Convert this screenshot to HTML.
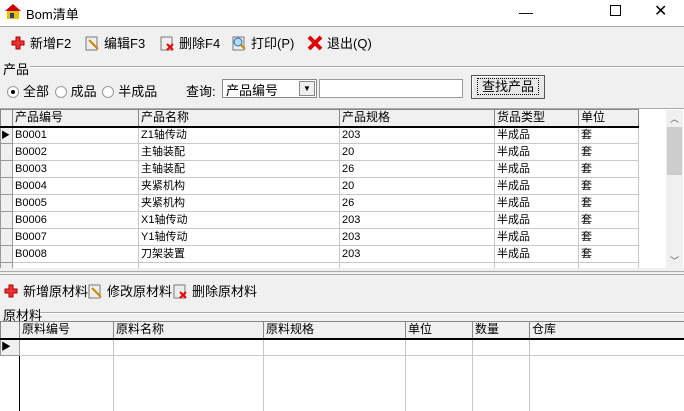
<!DOCTYPE html><html><head><meta charset="utf-8"><style>
*{margin:0;padding:0;box-sizing:border-box}
body{width:684px;height:411px;background:#f0f0f0;font:12px "Liberation Sans","Noto Sans CJK SC",sans-serif;position:relative;overflow:hidden;color:#000}
.a{position:absolute}
.t{font-family:"Liberation Sans","Noto Sans CJK SC",sans-serif}
table{border-collapse:collapse;table-layout:fixed;position:absolute;background:#fff}
td{border:1px solid #c8c8c8;height:17px;padding:0 2px;white-space:nowrap;overflow:hidden;font-size:11px;line-height:15px}
tr.h td{background:#f0f0f0;border:1px solid #888;border-bottom:2px solid #000;font-size:12px}
td.i{background:#f0f0f0;border-color:#999;padding:0}
.tb{position:absolute;top:33px;display:flex;align-items:center;font-size:13px}
.ic{width:16px;height:16px;margin-right:4px;display:inline-block}
.rd{display:inline-block;width:12px;height:12px;border-radius:50%;border:1px solid #999;background:#fff;vertical-align:-2px;margin-right:4px;position:relative}
</style></head><body>
<div class="a" style="left:0;top:0;width:684px;height:27px;background:#fff;border-bottom:1px solid #aaa"></div>
<svg class="a" style="left:4px;top:3px" width="18" height="16"><path d="M1 8 L9 1 L17 8Z" fill="#c00"/><rect x="3" y="8" width="12" height="8" fill="#e8c000"/><rect x="6" y="10" width="4" height="5" fill="#247"/></svg>
<div class="a" style="left:26px;top:4px;font-size:13px">Bom清单</div>
<div class="a" style="left:519px;top:4px;font-size:14px">—</div>
<div class="a" style="left:610px;top:5px;width:11px;height:11px;border:1px solid #000"></div>
<div class="a" style="left:654px;top:1px;font-size:16px">✕</div>

<div class="tb" style="left:10px"><svg class="ic" viewBox="0 0 16 16"><path d="M6 2h4v4h4v4h-4v4H6v-4H2V6h4z" fill="#e33" stroke="#a00"/></svg>新增F2</div>
<div class="tb" style="left:84px"><svg class="ic" viewBox="0 0 16 16"><rect x="2" y="2" width="11" height="13" fill="#eee" stroke="#777"/><path d="M5 5l9 9" stroke="#c80" stroke-width="2"/></svg>编辑F3</div>
<div class="tb" style="left:159px"><svg class="ic" viewBox="0 0 16 16"><rect x="2" y="2" width="11" height="13" fill="#eee" stroke="#777"/><path d="M8 9l6 6M14 9l-6 6" stroke="#e00" stroke-width="2"/></svg>删除F4</div>
<div class="tb" style="left:231px"><svg class="ic" viewBox="0 0 16 16"><rect x="2" y="2" width="11" height="13" fill="#eee" stroke="#777"/><circle cx="7" cy="7" r="4" fill="#adf" stroke="#36a"/><path d="M10 10l4 4" stroke="#c80" stroke-width="2"/></svg>打印(P)</div>
<div class="tb" style="left:307px"><svg class="ic" viewBox="0 0 16 16"><path d="M2 2l12 12M14 2L2 14" stroke="#d00" stroke-width="4"/></svg>退出(Q)</div>

<div class="a" style="left:3px;top:59px;font-size:13px">产品</div>
<div class="a" style="left:30px;top:66px;width:654px;border-top:1px solid #aaa;border-bottom:1px solid #fff"></div>
<div class="a" style="left:7px;top:81px;font-size:13px"><span class="rd"><span class="a" style="left:3px;top:3px;width:4px;height:4px;background:#000;border-radius:50%"></span></span>全部 <span class="rd" style="margin-left:2px"></span>成品 <span class="rd" style="margin-left:2px"></span>半成品</div>
<div class="a" style="left:186px;top:81px;font-size:13px">查询:</div>
<div class="a" style="left:222px;top:79px;width:95px;height:19px;background:#fff;border:1px solid #888;padding:0 3px;font-size:13px">产品编号</div>
<div class="a" style="left:299px;top:81px;width:16px;height:15px;background:#f0f0f0;border:1px solid #888;font-size:8px;text-align:center;line-height:14px">▼</div>
<div class="a" style="left:319px;top:79px;width:144px;height:19px;background:#fff;border:1px solid #999"></div>
<div class="a" style="left:471px;top:75px;width:74px;height:24px;border:1px solid #555;background:#e8e8e8;box-shadow:inset 1px 1px #fff;text-align:center;line-height:22px;font-size:13px"><span style="border:1px dotted #000;padding:0 4px">查找产品</span></div>

<div class="a" style="left:0;top:108px;width:684px;height:163px;background:#fff;border-top:1px solid #aaa"></div>
<table style="left:0;top:109px;width:638px" class="t">
<colgroup><col style="width:12px"><col style="width:126px"><col style="width:201px"><col style="width:155px"><col style="width:84px"><col style="width:60px"></colgroup>
<tr class="h"><td class="i"></td><td>产品编号</td><td>产品名称</td><td>产品规格</td><td>货品类型</td><td>单位</td></tr>
<tr><td class="i" style="font-size:9px">▶</td><td>B0001</td><td>Z1轴传动</td><td>203</td><td>半成品</td><td>套</td></tr>
<tr><td class="i"></td><td>B0002</td><td>主轴装配</td><td>20</td><td>半成品</td><td>套</td></tr>
<tr><td class="i"></td><td>B0003</td><td>主轴装配</td><td>26</td><td>半成品</td><td>套</td></tr>
<tr><td class="i"></td><td>B0004</td><td>夹紧机构</td><td>20</td><td>半成品</td><td>套</td></tr>
<tr><td class="i"></td><td>B0005</td><td>夹紧机构</td><td>26</td><td>半成品</td><td>套</td></tr>
<tr><td class="i"></td><td>B0006</td><td>X1轴传动</td><td>203</td><td>半成品</td><td>套</td></tr>
<tr><td class="i"></td><td>B0007</td><td>Y1轴传动</td><td>203</td><td>半成品</td><td>套</td></tr>
<tr><td class="i"></td><td>B0008</td><td>刀架装置</td><td>203</td><td>半成品</td><td>套</td></tr>
<tr><td class="i"></td><td></td><td></td><td></td><td></td><td></td></tr>
</table>
<div class="a" style="left:0;top:268px;width:684px;height:143px;background:#f0f0f0"></div>
<div class="a" style="left:666px;top:110px;width:17px;height:158px;background:#f0f0f0"><div class="a" style="left:1px;top:17px;width:15px;height:48px;background:#cdcdcd"></div><div class="a" style="left:4px;top:2px;font-size:9px;color:#555">︿</div><div class="a" style="left:4px;top:144px;font-size:9px;color:#555">﹀</div></div>
<div class="a" style="left:0;top:271px;width:684px;border-top:1px solid #aaa;border-bottom:1px solid #aaa;height:4px"></div>

<div class="tb" style="left:3px;top:281px"><svg class="ic" viewBox="0 0 16 16"><path d="M6 2h4v4h4v4h-4v4H6v-4H2V6h4z" fill="#e33" stroke="#a00"/></svg>新增原材料</div>
<div class="tb" style="left:87px;top:281px"><svg class="ic" viewBox="0 0 16 16"><rect x="2" y="2" width="11" height="13" fill="#eee" stroke="#777"/><path d="M5 5l9 9" stroke="#c80" stroke-width="2"/></svg>修改原材料</div>
<div class="tb" style="left:172px;top:281px"><svg class="ic" viewBox="0 0 16 16"><rect x="2" y="2" width="11" height="13" fill="#eee" stroke="#777"/><path d="M8 9l6 6M14 9l-6 6" stroke="#e00" stroke-width="2"/></svg>删除原材料</div>
<div class="a" style="left:3px;top:305px;font-size:13px">原材料</div>
<div class="a" style="left:40px;top:312px;width:644px;border-top:1px solid #aaa;border-bottom:1px solid #fff"></div>
<div class="a" style="left:0;top:321px;width:684px;height:90px;background:#fff"></div>
<table style="left:0;top:321px;width:700px" class="t">
<colgroup><col style="width:19px"><col style="width:94px"><col style="width:150px"><col style="width:142px"><col style="width:67px"><col style="width:57px"><col style="width:171px"></colgroup>
<tr class="h"><td class="i"></td><td>原料编号</td><td>原料名称</td><td>原料规格</td><td>单位</td><td>数量</td><td>仓库</td></tr>
<tr><td class="i" style="font-size:10px">▶</td><td></td><td></td><td></td><td></td><td></td><td></td></tr>
<tr><td style="border-left:0;border-bottom:0;height:55px;background:#fff;border-right:1px solid #000"></td><td style="border-bottom:0"></td><td style="border-bottom:0"></td><td style="border-bottom:0"></td><td style="border-bottom:0"></td><td style="border-bottom:0"></td><td style="border-bottom:0"></td></tr>
</table>
</body></html>
